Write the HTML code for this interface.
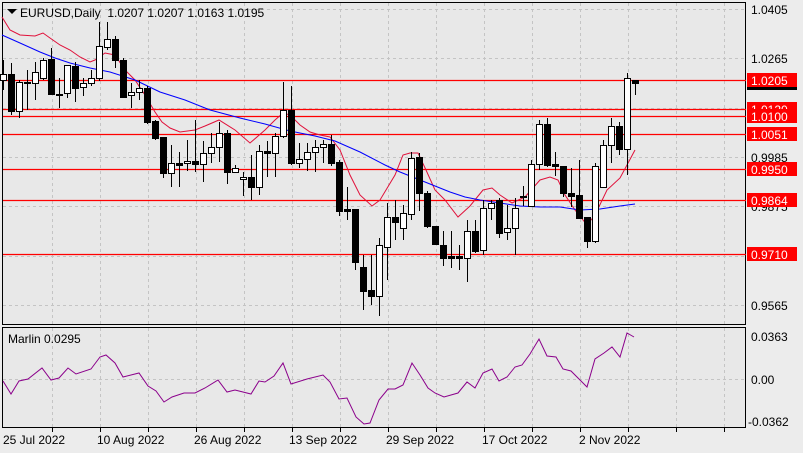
<!DOCTYPE html>
<html><head><meta charset="utf-8"><style>
html,body{margin:0;padding:0;background:#fff;width:803px;height:453px;overflow:hidden}
svg{display:block;font-family:"Liberation Sans",sans-serif}
</style></head><body>
<svg id="s" width="803" height="453" viewBox="0 0 803 453" xmlns="http://www.w3.org/2000/svg">
<rect x="0" y="0" width="803" height="453" fill="#ececec"/>
<rect x="2.5" y="2.5" width="743" height="322" fill="#e8e8e8" stroke="#000"/>
<rect x="2.5" y="327.5" width="743" height="100" fill="#e8e8e8" stroke="#000"/>
<g id="grid" stroke="#c4c4c4" stroke-dasharray="3,3" stroke-width="1"></g>
<g id="lines"></g>
<g id="candles"></g>
<g font-size="12" fill="#000">
<text x="20" y="17">EURUSD,Daily&#160;&#160;1.0207 1.0207 1.0163 1.0195</text>
<text x="751" y="14">1.0405</text>
<text x="751" y="63">1.0265</text>
<text x="751" y="162">0.9985</text>
<text x="751" y="211">0.9875</text>
<text x="751" y="310">0.9565</text>
<text x="8" y="343">Marlin 0.0295</text>
<text x="751" y="341">0.0363</text>
<text x="751" y="384">0.00</text>
<text x="748" y="426">-0.0362</text>
<text x="3" y="444">25 Jul 2022</text>
<text x="97" y="444">10 Aug 2022</text>
<text x="194" y="444">26 Aug 2022</text>
<text x="289" y="444">13 Sep 2022</text>
<text x="386" y="444">29 Sep 2022</text>
<text x="482" y="444">17 Oct 2022</text>
<text x="579" y="444">2 Nov 2022</text>
</g>
<path d="M7 9 L17 9 L12 14 Z" fill="#000"/>
<g id="labels"></g>
</svg>
<script>
var NS="http://www.w3.org/2000/svg";
function el(p,t,a){var e=document.createElementNS(NS,t);for(var k in a)e.setAttribute(k,a[k]);document.getElementById(p).appendChild(e);return e;}
// grid
for(var x=52;x<746;x+=48){el("grid","line",{x1:x+.5,y1:3,x2:x+.5,y2:324});el("grid","line",{x1:x+.5,y1:328,x2:x+.5,y2:427});}
[9,58,108,157,206,256,305].forEach(function(y){el("grid","line",{x1:3,y1:y+.5,x2:745,y2:y+.5});});
el("grid","line",{x1:3,y1:379.5,x2:745,y2:379.5});
// ticks
[52,100,148,196,244,292,340,388,436,484,532,580,628,676,724].forEach(function(x){el("grid","line",{x1:x+.5,y1:428,x2:x+.5,y2:432,"stroke-dasharray":"none",stroke:"#000"});});
// red levels
var lv=[[80,"1.0205"],[109,"1.0120"],[116,"1.0100"],[134,"1.0051"],[169,"0.9950"],[200,"0.9864"],[254,"0.9710"]];
lv.forEach(function(l){el("lines","line",{x1:3,y1:l[0]+.5,x2:746,y2:l[0]+.5,stroke:"#ff0000","stroke-width":1.2});});
// candles: x, bodyTop, bodyBot, wickTop, wickBot, white?
var c=[[3,74,80,60,90,1],[11,74,111,63,115,0],[19,82,111,80,118,1],[27,82,83,70,110,0],[35,72,83,62,100,1],[43,60,78,58,80,1],[51,59,94,48,95,0],[59,94,95,78,108,0],[67,65,93,65,98,1],[75,66,88,62,102,0],[83,83,87,78,96,1],[91,78,83,70,86,1],[99,46,78,22,81,1],[107,39,47,22,50,1],[115,39,60,36,68,0],[123,60,97,58,98,0],[131,92,95,83,108,1],[139,88,92,80,100,1],[147,88,122,86,124,0],[155,121,138,120,140,0],[163,137,173,137,178,0],[171,163,173,145,187,1],[179,163,165,152,187,0],[187,161,163,140,171,1],[195,161,164,120,172,0],[203,153,164,141,182,1],[211,147,153,133,163,1],[219,133,147,122,162,1],[227,133,172,130,184,0],[235,168,172,165,172,1],[243,177,179,172,196,1],[251,177,187,155,200,0],[259,151,187,145,195,1],[267,151,153,141,177,0],[275,136,153,133,177,1],[283,110,136,82,138,1],[291,110,163,86,165,0],[299,159,163,143,168,1],[307,152,159,143,171,1],[315,147,152,140,172,1],[323,144,147,140,163,1],[331,144,163,135,166,0],[339,162,211,160,216,0],[347,209,211,187,220,0],[355,209,262,209,270,0],[363,267,291,255,310,0],[371,290,296,255,305,0],[379,245,296,238,316,1],[387,217,247,203,280,1],[395,217,222,200,240,0],[403,213,228,205,240,1],[411,158,214,152,220,1],[419,157,193,153,211,0],[427,193,226,191,228,0],[435,226,244,226,245,0],[443,245,258,231,266,0],[451,256,258,231,268,0],[459,256,258,245,270,0],[467,231,258,220,282,1],[475,231,251,220,253,0],[483,208,250,200,255,1],[491,203,208,200,220,1],[499,200,233,198,238,0],[507,228,232,205,240,1],[515,208,228,198,255,1],[523,196,197,186,206,0],[531,164,206,160,207,1],[539,124,164,120,170,1],[547,124,165,118,167,0],[555,164,166,152,176,0],[563,166,193,166,197,0],[571,193,196,168,207,0],[579,195,218,160,218,0],[587,217,241,217,248,0],[595,166,241,163,243,1],[603,145,187,140,187,1],[611,126,145,118,163,1],[619,126,149,122,155,0],[627,78,149,73,175,1],[635,80,83,80,95,0]];
c.forEach(function(d){var x=d[0];
el("candles","line",{x1:x+.5,y1:d[3],x2:x+.5,y2:d[4],stroke:"#000"});
el("candles","rect",{x:x-2.5,y:d[1]+.5,width:6,height:Math.max(1,d[2]-d[1]),fill:d[5]?"#fff":"#000",stroke:"#000"});});
function pl(pts,col){el("lines","polyline",{points:pts.map(function(p){return p.join(",")}).join(" "),fill:"none",stroke:col,"stroke-width":1});}
pl([[2,17],[10,30],[20,35],[35,36],[43,33],[50,38],[60,45],[70,50],[80,57],[90,62],[95,60],[105,53],[115,55],[125,70],[135,80],[145,95],[155,112],[162,122],[170,128],[180,132],[195,130],[205,126],[219,120],[235,130],[250,143],[265,130],[275,120],[283,113],[290,115],[300,125],[310,132],[320,135],[330,137],[340,150],[350,175],[360,195],[372,206],[380,200],[395,175],[403,155],[410,153],[418,153],[426,170],[435,190],[445,200],[458,217],[470,206],[483,190],[492,188],[500,195],[512,203],[525,197],[540,180],[550,177],[558,180],[565,195],[575,210],[587,225],[595,215],[607,190],[620,178],[627,165],[635,150]],"#e0103a");
pl([[2,35],[20,43],[40,52],[55,58],[70,63],[90,68],[100,70],[110,72],[135,80],[160,92],[185,100],[210,110],[240,118],[265,124],[290,131],[315,136],[335,141],[360,152],[385,165],[400,172],[420,180],[435,186],[450,192],[465,197],[480,200],[500,203],[520,206],[540,207],[560,207],[580,210],[600,209],[620,206],[635,204]],"#0000ff");
pl([[3,381],[11,394],[19,381],[28,379],[42,368],[51,380],[59,378],[68,368],[76,374],[91,369],[100,357],[106,355],[115,363],[123,377],[139,373],[148,386],[156,391],[164,402],[172,397],[184,393],[195,393],[205,388],[218,380],[227,392],[235,390],[251,394],[259,381],[265,382],[274,376],[283,363],[291,384],[307,379],[323,375],[330,382],[339,399],[347,398],[356,417],[364,424],[370,423],[379,400],[388,389],[395,389],[403,385],[412,363],[420,375],[428,388],[435,393],[444,397],[458,393],[467,382],[475,388],[483,373],[492,369],[499,381],[507,377],[515,367],[522,365],[530,354],[539,339],[547,356],[556,357],[563,369],[571,371],[587,387],[595,359],[604,353],[612,347],[620,357],[627,333],[634,337]],"#8b008b");
// labels
el("labels","rect",{x:747,y:85,width:50,height:5,fill:"#000"});
lv.forEach(function(l){el("labels","rect",{x:747,y:l[0]-7,width:50,height:14,fill:"#ff0000"});
var t=el("labels","text",{x:751,y:l[0]+5,fill:"#fff","font-size":12});t.textContent=l[1];});
</script>
</body></html>
